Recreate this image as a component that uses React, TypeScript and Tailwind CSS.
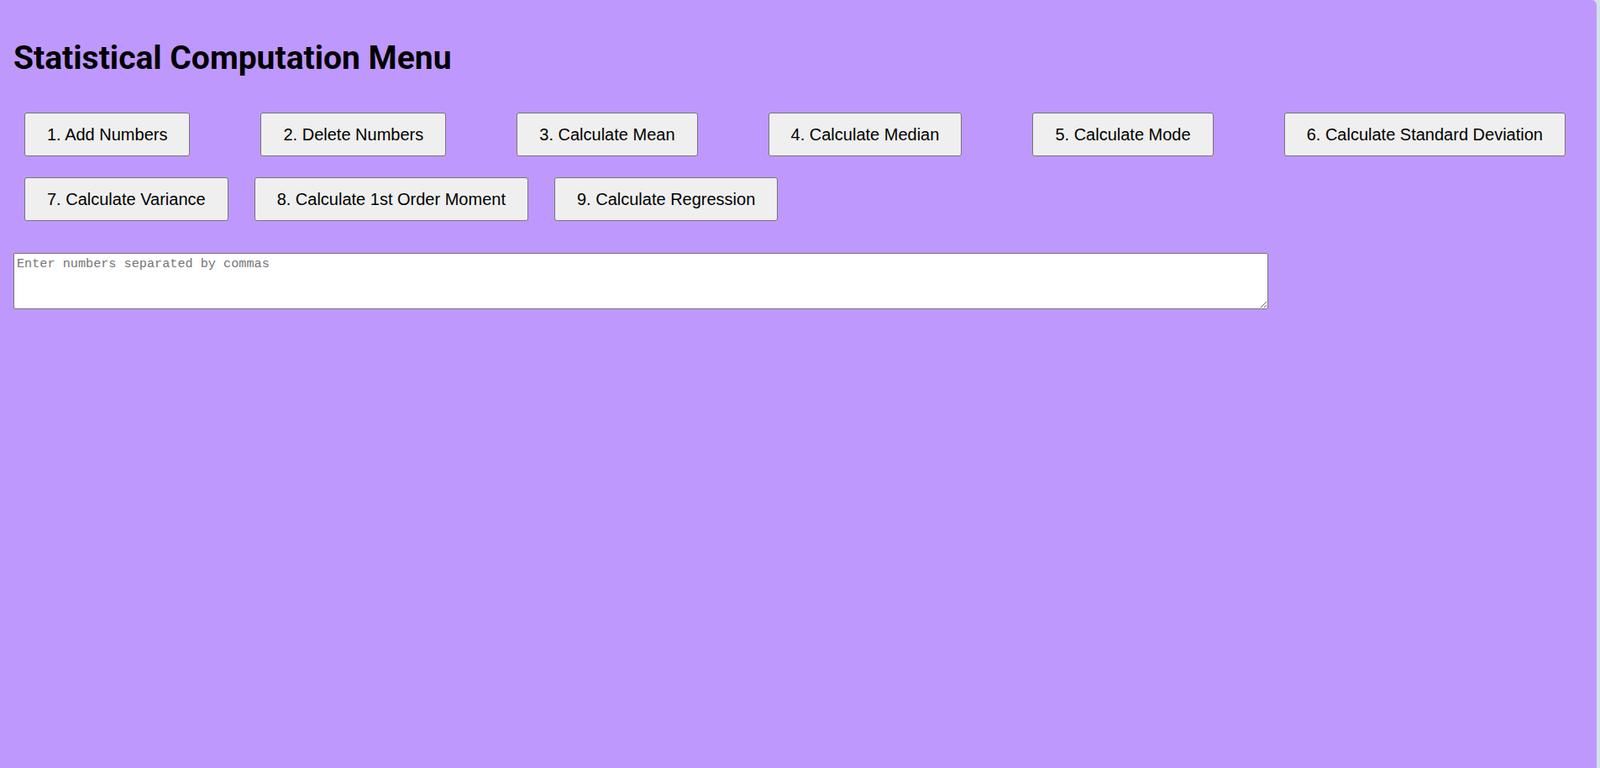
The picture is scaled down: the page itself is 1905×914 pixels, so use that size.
const firstRow = [
  '1. Add Numbers',
  '2. Delete Numbers',
  '3. Calculate Mean',
  '4. Calculate Median',
  '5. Calculate Mode',
  '6. Calculate Standard Deviation',
]

const secondRow = [
  '7. Calculate Variance',
  '8. Calculate 1st Order Moment',
  '9. Calculate Regression',
]

const MenuButton = ({ label }: { label: string }) => (
  <button
    type="button"
    className="bg-[#efefef] border border-[#767676] rounded-[3px] px-[26px] py-[13px] text-[20px] leading-[24px] text-black font-['Liberation_Sans',Arial,sans-serif] whitespace-nowrap"
  >
    {label}
  </button>
)

const App = () => {
  return (
    <div className="flex min-h-screen bg-[#d0e3e6]">
      <div className="flex-1 mr-[4px] bg-[#bf98fe] rounded-tr-[6px] px-4 pt-[46px]">
        <h1 className="text-[39px] leading-[46px] font-bold text-black font-['Roboto',sans-serif]">
          Statistical Computation Menu
        </h1>

        {/* row one spreads across the page */}
        <div className="flex justify-between ml-[13px] mr-[21px] mt-[42px]">
          {firstRow.map((label) => (
            <MenuButton key={label} label={label} />
          ))}
        </div>

        <div className="flex gap-[31px] ml-[13px] mt-[25px]">
          {secondRow.map((label) => (
            <MenuButton key={label} label={label} />
          ))}
        </div>

        <textarea
          placeholder="Enter numbers separated by commas"
          className="block mt-[38px] w-[1494px] h-[67px] bg-white border border-[#767676] rounded-[2px] px-[3px] pt-[4px] pb-[2px] text-[15.2px] leading-[17px] font-['Liberation_Mono',monospace] placeholder:text-[#757575]"
        />
      </div>
    </div>
  )
}

export default App
